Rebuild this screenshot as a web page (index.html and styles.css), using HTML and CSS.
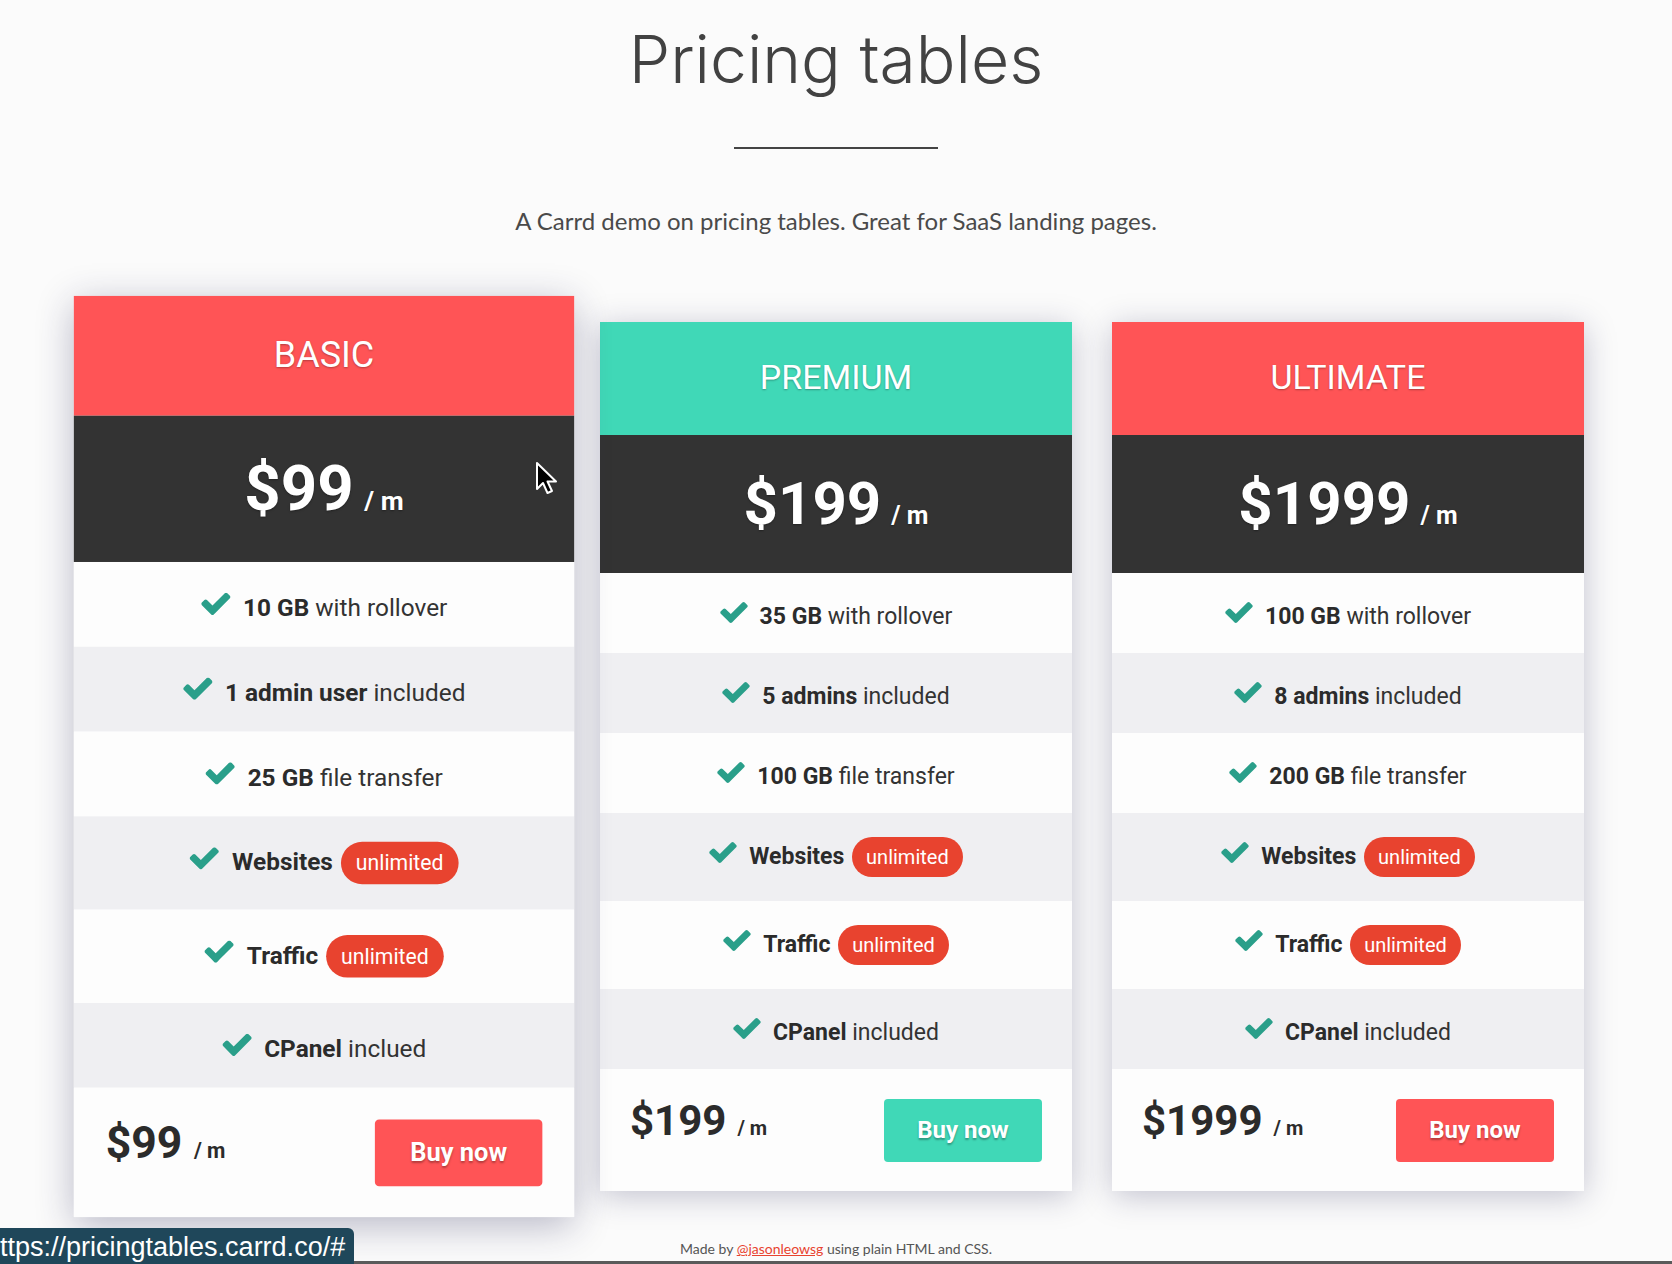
FILE: index.html
```html
<!DOCTYPE html>
<html lang="en">
<head>
<meta charset="utf-8">
<title>Pricing tables</title>
<link rel="stylesheet" href="styles.css">
</head>
<body>
<header class="hero">
  <h1 class="title">Pricing tables</h1>
  <div class="rule"></div>
  <p class="subtitle">A Carrd demo on pricing tables. Great for SaaS landing pages.</p>
</header>

<main class="cards">
  <section class="card card-hover">
    <div class="card-head red">BASIC</div>
    <div class="card-price"><span class="amt">$99</span><span class="per">/ m</span></div>
    <ul class="features">
      <li><svg class="chk" viewBox="121 334 1550 1188"><path d="M1671 566q0 40-28 68l-724 724-136 136q-28 28-68 28t-68-28l-136-136-362-362q-28-28-28-68t28-68l136-136q28-28 68-28t68 28l294 295 656-657q28-28 68-28t68 28l136 136q28 28 28 68z"/></svg><b>10 GB</b> with rollover</li>
      <li><svg class="chk" viewBox="121 334 1550 1188"><path d="M1671 566q0 40-28 68l-724 724-136 136q-28 28-68 28t-68-28l-136-136-362-362q-28-28-28-68t28-68l136-136q28-28 68-28t68 28l294 295 656-657q28-28 68-28t68 28l136 136q28 28 28 68z"/></svg><b>1 admin user</b> included</li>
      <li><svg class="chk" viewBox="121 334 1550 1188"><path d="M1671 566q0 40-28 68l-724 724-136 136q-28 28-68 28t-68-28l-136-136-362-362q-28-28-28-68t28-68l136-136q28-28 68-28t68 28l294 295 656-657q28-28 68-28t68 28l136 136q28 28 28 68z"/></svg><b>25 GB</b> file transfer</li>
      <li class="has-badge"><svg class="chk" viewBox="121 334 1550 1188"><path d="M1671 566q0 40-28 68l-724 724-136 136q-28 28-68 28t-68-28l-136-136-362-362q-28-28-28-68t28-68l136-136q28-28 68-28t68 28l294 295 656-657q28-28 68-28t68 28l136 136q28 28 28 68z"/></svg><b>Websites</b> <span class="badge">unlimited</span></li>
      <li class="has-badge"><svg class="chk" viewBox="121 334 1550 1188"><path d="M1671 566q0 40-28 68l-724 724-136 136q-28 28-68 28t-68-28l-136-136-362-362q-28-28-28-68t28-68l136-136q28-28 68-28t68 28l294 295 656-657q28-28 68-28t68 28l136 136q28 28 28 68z"/></svg><b>Traffic</b> <span class="badge">unlimited</span></li>
      <li><svg class="chk" viewBox="121 334 1550 1188"><path d="M1671 566q0 40-28 68l-724 724-136 136q-28 28-68 28t-68-28l-136-136-362-362q-28-28-28-68t28-68l136-136q28-28 68-28t68 28l294 295 656-657q28-28 68-28t68 28l136 136q28 28 28 68z"/></svg><b>CPanel</b> inclued</li>
    </ul>
    <div class="card-foot">
      <div class="foot-price"><span class="amt">$99</span><span class="per">/ m</span></div>
      <a class="buy red" href="#">Buy now</a>
    </div>
  </section>

  <section class="card">
    <div class="card-head teal">PREMIUM</div>
    <div class="card-price"><span class="amt">$199</span><span class="per">/ m</span></div>
    <ul class="features">
      <li><svg class="chk" viewBox="121 334 1550 1188"><path d="M1671 566q0 40-28 68l-724 724-136 136q-28 28-68 28t-68-28l-136-136-362-362q-28-28-28-68t28-68l136-136q28-28 68-28t68 28l294 295 656-657q28-28 68-28t68 28l136 136q28 28 28 68z"/></svg><b>35 GB</b> with rollover</li>
      <li><svg class="chk" viewBox="121 334 1550 1188"><path d="M1671 566q0 40-28 68l-724 724-136 136q-28 28-68 28t-68-28l-136-136-362-362q-28-28-28-68t28-68l136-136q28-28 68-28t68 28l294 295 656-657q28-28 68-28t68 28l136 136q28 28 28 68z"/></svg><b>5 admins</b> included</li>
      <li><svg class="chk" viewBox="121 334 1550 1188"><path d="M1671 566q0 40-28 68l-724 724-136 136q-28 28-68 28t-68-28l-136-136-362-362q-28-28-28-68t28-68l136-136q28-28 68-28t68 28l294 295 656-657q28-28 68-28t68 28l136 136q28 28 28 68z"/></svg><b>100 GB</b> file transfer</li>
      <li class="has-badge"><svg class="chk" viewBox="121 334 1550 1188"><path d="M1671 566q0 40-28 68l-724 724-136 136q-28 28-68 28t-68-28l-136-136-362-362q-28-28-28-68t28-68l136-136q28-28 68-28t68 28l294 295 656-657q28-28 68-28t68 28l136 136q28 28 28 68z"/></svg><b>Websites</b> <span class="badge">unlimited</span></li>
      <li class="has-badge"><svg class="chk" viewBox="121 334 1550 1188"><path d="M1671 566q0 40-28 68l-724 724-136 136q-28 28-68 28t-68-28l-136-136-362-362q-28-28-28-68t28-68l136-136q28-28 68-28t68 28l294 295 656-657q28-28 68-28t68 28l136 136q28 28 28 68z"/></svg><b>Traffic</b> <span class="badge">unlimited</span></li>
      <li><svg class="chk" viewBox="121 334 1550 1188"><path d="M1671 566q0 40-28 68l-724 724-136 136q-28 28-68 28t-68-28l-136-136-362-362q-28-28-28-68t28-68l136-136q28-28 68-28t68 28l294 295 656-657q28-28 68-28t68 28l136 136q28 28 28 68z"/></svg><b>CPanel</b> included</li>
    </ul>
    <div class="card-foot">
      <div class="foot-price"><span class="amt">$199</span><span class="per">/ m</span></div>
      <a class="buy teal" href="#">Buy now</a>
    </div>
  </section>

  <section class="card">
    <div class="card-head red">ULTIMATE</div>
    <div class="card-price"><span class="amt">$1999</span><span class="per">/ m</span></div>
    <ul class="features">
      <li><svg class="chk" viewBox="121 334 1550 1188"><path d="M1671 566q0 40-28 68l-724 724-136 136q-28 28-68 28t-68-28l-136-136-362-362q-28-28-28-68t28-68l136-136q28-28 68-28t68 28l294 295 656-657q28-28 68-28t68 28l136 136q28 28 28 68z"/></svg><b>100 GB</b> with rollover</li>
      <li><svg class="chk" viewBox="121 334 1550 1188"><path d="M1671 566q0 40-28 68l-724 724-136 136q-28 28-68 28t-68-28l-136-136-362-362q-28-28-28-68t28-68l136-136q28-28 68-28t68 28l294 295 656-657q28-28 68-28t68 28l136 136q28 28 28 68z"/></svg><b>8 admins</b> included</li>
      <li><svg class="chk" viewBox="121 334 1550 1188"><path d="M1671 566q0 40-28 68l-724 724-136 136q-28 28-68 28t-68-28l-136-136-362-362q-28-28-28-68t28-68l136-136q28-28 68-28t68 28l294 295 656-657q28-28 68-28t68 28l136 136q28 28 28 68z"/></svg><b>200 GB</b> file transfer</li>
      <li class="has-badge"><svg class="chk" viewBox="121 334 1550 1188"><path d="M1671 566q0 40-28 68l-724 724-136 136q-28 28-68 28t-68-28l-136-136-362-362q-28-28-28-68t28-68l136-136q28-28 68-28t68 28l294 295 656-657q28-28 68-28t68 28l136 136q28 28 28 68z"/></svg><b>Websites</b> <span class="badge">unlimited</span></li>
      <li class="has-badge"><svg class="chk" viewBox="121 334 1550 1188"><path d="M1671 566q0 40-28 68l-724 724-136 136q-28 28-68 28t-68-28l-136-136-362-362q-28-28-28-68t28-68l136-136q28-28 68-28t68 28l294 295 656-657q28-28 68-28t68 28l136 136q28 28 28 68z"/></svg><b>Traffic</b> <span class="badge">unlimited</span></li>
      <li><svg class="chk" viewBox="121 334 1550 1188"><path d="M1671 566q0 40-28 68l-724 724-136 136q-28 28-68 28t-68-28l-136-136-362-362q-28-28-28-68t28-68l136-136q28-28 68-28t68 28l294 295 656-657q28-28 68-28t68 28l136 136q28 28 28 68z"/></svg><b>CPanel</b> included</li>
    </ul>
    <div class="card-foot">
      <div class="foot-price"><span class="amt">$1999</span><span class="per">/ m</span></div>
      <a class="buy red" href="#">Buy now</a>
    </div>
  </section>
</main>

<footer class="credit">Made by <a href="#">@jasonleowsg</a> using plain HTML and CSS.</footer>

<svg class="cursor" viewBox="0 0 24 36" width="24" height="36"><path d="M2 2 L2 28 L8 22 L12.5 32 L17 30 L12.5 20.5 L21 20.5 Z" fill="#000" stroke="#fff" stroke-width="2" stroke-linejoin="round"/></svg>
<div class="status">ttps://pricingtables.carrd.co/#</div>
<div class="edge"></div>
</body>
</html>
```

FILE: styles.css
```css
* { box-sizing: border-box; }

html, body {
  margin: 0;
  padding: 0;
}

body {
  background: #fbfbfb;
  color: #333;
  font-family: Roboto, "Liberation Sans", sans-serif;
  height: 1264px;
  overflow: hidden;
}

.hero {
  padding-top: 19px;
  text-align: center;
}

.title {
  margin: 0;
  font-family: Inter, "Open Sans", sans-serif;
  font-weight: 300;
  font-size: 66px;
  line-height: 80px;
  color: #424242;
}

.rule {
  width: 204px;
  height: 2px;
  background: #444;
  margin: 48px auto 0;
}

.subtitle {
  margin: 57px 0 0;
  font-family: Lato, "Liberation Sans", sans-serif;
  font-size: 24px;
  line-height: 30px;
  color: #4a4a4a;
}

.cards {
  display: flex;
  justify-content: center;
  align-items: flex-start;
  gap: 40px;
  margin-top: 86px;
}

.card {
  width: 472px;
  background: #fdfdfd;
  box-shadow: 0 5px 30px rgba(30, 30, 80, 0.26);
}

.card-hover {
  transform: scale(1.06);
  box-shadow: 0 8px 34px rgba(30, 30, 80, 0.3);
  position: relative;
  z-index: 1;
}

.card-head {
  height: 113px;
  padding-bottom: 4px;
  display: flex;
  align-items: center;
  justify-content: center;
  color: #fff;
  font-size: 34px;
  font-weight: 400;
  text-shadow: 0 1px 2px rgba(0, 0, 0, 0.3);
}

.red { background: #ff5456; }
.teal { background: #40d8b7; }

.card-price {
  height: 138px;
  background: #333;
  color: #fff;
  display: flex;
  align-items: center;
  justify-content: center;
  font-weight: 700;
  text-shadow: 0 1px 2px rgba(0, 0, 0, 0.35);
}

.card-price .amt {
  font-size: 60px;
  line-height: 1;
}

.card-price .per {
  font-size: 25px;
  margin-left: 10px;
  align-self: center;
  margin-top: 22px;
}

.features {
  list-style: none;
  margin: 0;
  padding: 0;
}

.features li {
  padding: 28px 10px 20px;
  text-align: center;
  font-size: 23px;
  line-height: 32px;
  color: #333;
}

.features li.has-badge {
  padding: 24px 10px;
}

.features li:nth-child(even) {
  background: #efeff2;
}

.features li:nth-child(odd) {
  background: #fdfdfd;
}

.features b {
  font-weight: 700;
  color: #2b2b2b;
}

.chk {
  width: 28px;
  height: 21px;
  fill: #2a9f8a;
  margin-right: 12px;
  vertical-align: 1px;
}

.badge {
  display: inline-block;
  background: #e8432f;
  color: #fff;
  font-size: 20px;
  line-height: 28px;
  padding: 6px 14px;
  border-radius: 20px;
  margin-left: 2px;
}

.card-foot {
  height: 122px;
  padding: 0 30px 0 30px;
  display: flex;
  align-items: center;
  justify-content: space-between;
  background: #fdfdfd;
}

.foot-price {
  font-weight: 700;
  color: #2b2b2b;
  display: flex;
  align-items: baseline;
  margin-top: -20px;
}

.foot-price .amt {
  font-size: 42px;
}

.foot-price .per {
  font-size: 20px;
  margin-left: 11px;
}

.buy {
  width: 158px;
  height: 63px;
  display: flex;
  align-items: center;
  justify-content: center;
  color: #fff;
  font-weight: 700;
  font-size: 24px;
  text-decoration: none;
  border-radius: 4px;
  text-shadow: 0 2px 2px rgba(0, 0, 0, 0.3);
}

.credit {
  margin-top: 48px;
  text-align: center;
  font-family: Lato, "Liberation Sans", sans-serif;
  font-size: 14px;
  line-height: 20px;
  color: #555;
}

.credit a {
  color: #e8432f;
  text-decoration: underline;
}

.cursor {
  position: absolute;
  left: 535px;
  top: 461px;
  z-index: 5;
}

.status {
  position: fixed;
  left: 0;
  bottom: 0;
  width: 354px;
  height: 36px;
  padding-top: 1px;
  background: #1f475a;
  color: #fff;
  font-family: "Liberation Sans", Arial, sans-serif;
  font-size: 27px;
  line-height: 36px;
  border-top-right-radius: 6px;
  overflow: hidden;
  white-space: nowrap;
  z-index: 6;
}

.edge {
  position: fixed;
  left: 0;
  right: 0;
  bottom: 0;
  height: 3px;
  background: #5a5a5a;
  z-index: 5;
}
```
